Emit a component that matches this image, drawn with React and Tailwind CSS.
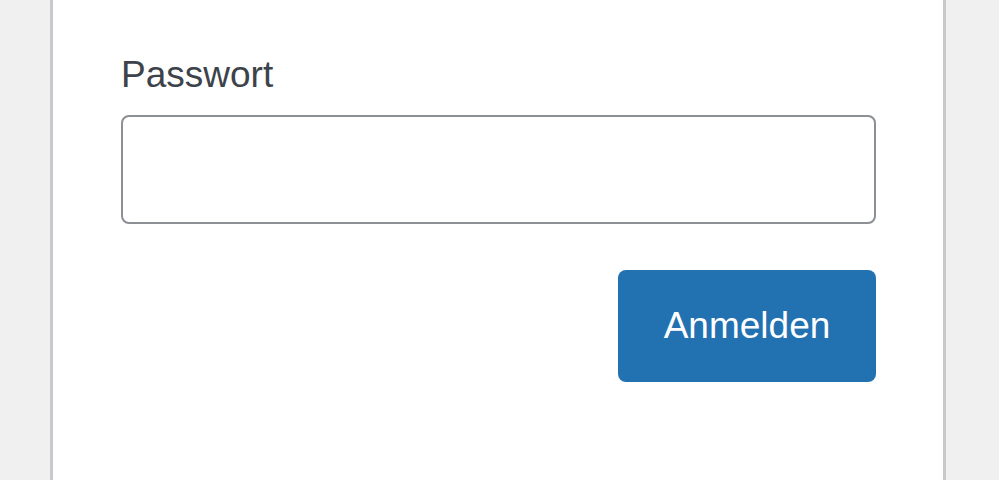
export default function App() {
  return (
    <div className="h-[480px] w-[999px] overflow-hidden bg-[#f0f0f1] font-['Liberation_Sans',Arial,sans-serif]">
      <div className="ml-[50px] h-full w-[896px] border-x-[3px] border-[#c8c9cc] bg-white pl-[68px] pr-[67px] pt-[53px]">
        <div className="flex flex-col">
          <label className="block text-[37px] leading-[44px] text-[#3c434a]">Passwort</label>
          <div className="mt-[18px] h-[109px] w-full rounded-[8px] border-2 border-[#8c8f94] bg-white"></div>
          <div className="mt-[46px] flex justify-end">
            <button className="flex h-[112px] w-[258px] items-center justify-center rounded-[8px] bg-[#2271b1] text-[37px] text-white">
              Anmelden
            </button>
          </div>
        </div>
      </div>
    </div>
  );
}
